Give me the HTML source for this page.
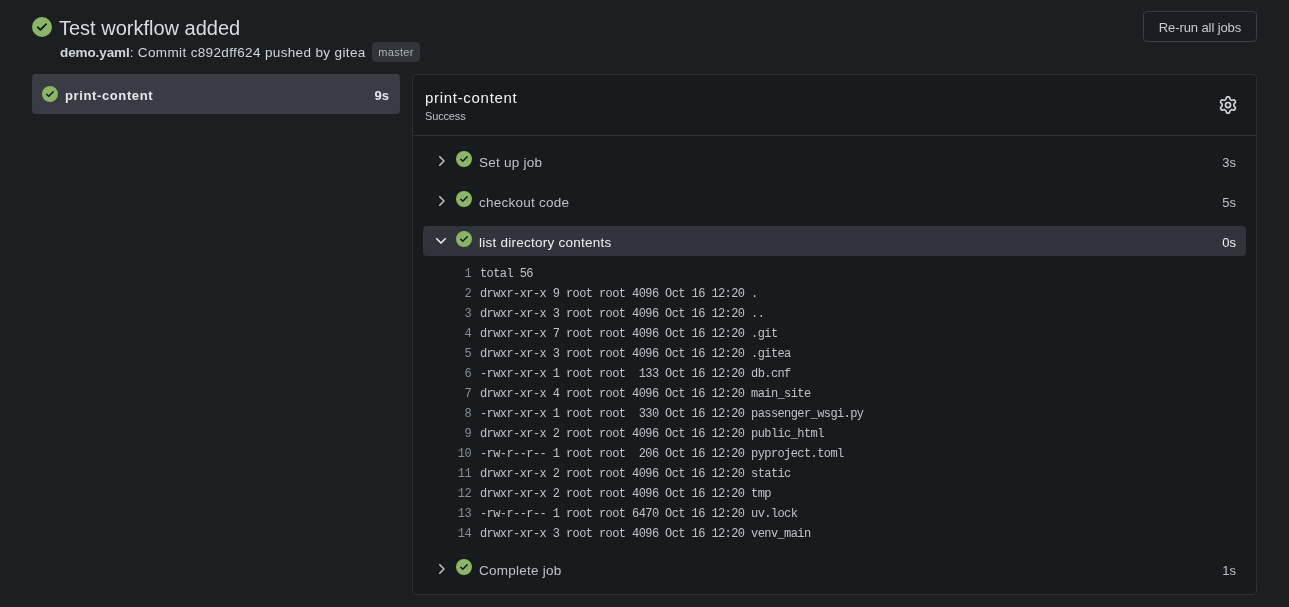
<!DOCTYPE html>
<html><head><meta charset="utf-8">
<style>
*{box-sizing:border-box;margin:0;padding:0}
html,body{width:1289px;height:607px;overflow:hidden;background:#1c1f22;font-family:"Liberation Sans",sans-serif;color:#d2d7dd}
.abs{position:absolute;will-change:transform}
svg{display:block}
.title{left:59px;top:16px;font-size:20px;line-height:24px;color:#d9dde2;white-space:nowrap}
.sub{left:60px;top:45px;font-size:13.5px;line-height:16px;letter-spacing:0.36px;color:#d0d5db;white-space:nowrap}
.sub b{font-weight:bold;letter-spacing:-0.1px}
.label{left:372px;top:42px;width:48px;height:20px;background:#31353a;border-radius:4px;font-size:11px;line-height:20px;text-align:center;color:#aeb4bb;letter-spacing:0.3px}
.btn{left:1143px;top:11px;width:114px;height:31px;border:1px solid #3b3f45;border-radius:4px;background:#1a1d21;font-size:13px;line-height:31px;letter-spacing:-0.1px;text-align:center;color:#c9cdd2}
.job{left:32px;top:74px;width:368px;height:40px;background:#393c42;border-radius:4px}
.job .name{position:absolute;left:33px;top:14px;font-size:13px;line-height:16px;font-weight:bold;letter-spacing:0.62px;color:#e4e7eb}
.job .dur{position:absolute;right:11px;top:14px;font-size:13px;line-height:16px;font-weight:bold;color:#e4e7eb}
.panel{will-change:transform;left:412px;top:74px;width:845px;height:521px;border:1px solid #2c3136;border-radius:4px;background:#181b1e}
.ph-title{position:absolute;left:12px;top:14px;font-size:15px;line-height:18px;letter-spacing:0.7px;color:#f0f1f3}
.ph-detail{position:absolute;left:12px;top:34px;font-size:11px;line-height:14px;color:#bec2c8;letter-spacing:-0.15px}
.ph-border{position:absolute;left:0;top:60px;width:843px;height:1px;background:#2c3136}
.step{position:absolute;left:10px;width:823px;height:30px;border-radius:4px;color:#bec2c8;font-size:13px}
.step.sel{background:#31353b;color:#eef0f2}
.step .txt{position:absolute;left:56px;top:9px;line-height:16px;white-space:nowrap;font-size:13.5px;letter-spacing:0.25px}
.step .d{position:absolute;right:10px;top:9px;line-height:16px}
.logs{position:absolute;left:10px;top:189px;font-family:"Liberation Mono",monospace;font-size:12px;letter-spacing:-0.59px;color:#bec2c7}
.ll{height:20px;line-height:20px;white-space:pre;display:flex}
.ln{width:48px;text-align:right;color:#868d95}
.lm{margin-left:9px}
</style></head><body>
<svg class="abs" style="left:32px;top:17px" width="20" height="20" viewBox="0 0 16 16"><circle cx="8" cy="8" r="5" fill="#15171a"/><path fill="#8ab466" d="M8 16A8 8 0 1 1 8 0a8 8 0 0 1 0 16Zm3.78-9.72a.751.751 0 0 0-.018-1.042.751.751 0 0 0-1.042-.018L6.75 9.19 5.28 7.72a.751.751 0 0 0-1.042.018.751.751 0 0 0-.018 1.042l2 2a.75.75 0 0 0 1.06 0Z"/></svg>
<div class="abs title" id="title">Test workflow added</div>
<div class="abs sub" id="sub"><b>demo.yaml</b>: Commit c892dff624 pushed by gitea</div>
<div class="abs label"><span id="lbl">master</span></div>
<div class="abs btn"><span id="btn">Re-run all jobs</span></div>

<div class="abs job">
  <svg style="position:absolute;left:10px;top:12px" width="16" height="16" viewBox="0 0 16 16"><circle cx="8" cy="8" r="5" fill="#15171a"/><path fill="#8ab466" d="M8 16A8 8 0 1 1 8 0a8 8 0 0 1 0 16Zm3.78-9.72a.751.751 0 0 0-.018-1.042.751.751 0 0 0-1.042-.018L6.75 9.19 5.28 7.72a.751.751 0 0 0-1.042.018.751.751 0 0 0-.018 1.042l2 2a.75.75 0 0 0 1.06 0Z"/></svg>
  <div class="name" id="jname">print-content</div>
  <div class="dur" id="jdur">9s</div>
</div>

<div class="abs panel">
  <div class="ph-title" id="ptitle">print-content</div>
  <div class="ph-detail" id="pdet">Success</div>
  <svg style="position:absolute;left:806px;top:21px" width="18" height="18" viewBox="0 0 16 16"><path fill="#d0d4d9" d="M8 0a8.2 8.2 0 0 1 .701.031C9.444.095 9.99.645 10.16 1.29l.288 1.107c.018.066.079.158.212.224.231.114.454.243.668.386.123.082.233.09.299.071l1.103-.303c.644-.176 1.392.021 1.820.63.27.385.506.792.704 1.218.315.675.111 1.422-.364 1.891l-.814.806c-.049.048-.098.147-.088.294.016.257.016.515 0 .772-.01.147.038.246.088.294l.814.806c.475.469.679 1.216.364 1.891a7.977 7.977 0 0 1-.704 1.217c-.428.61-1.176.807-1.820.63l-1.102-.302c-.067-.019-.177-.011-.3.071a5.909 5.909 0 0 1-.668.386c-.133.066-.194.158-.211.224l-.29 1.106c-.168.646-.715 1.196-1.458 1.26a8.006 8.006 0 0 1-1.402 0c-.743-.064-1.289-.614-1.458-1.26l-.289-1.106c-.018-.066-.079-.158-.212-.224a5.738 5.738 0 0 1-.668-.386c-.123-.082-.233-.09-.299-.071l-1.103.303c-.644.176-1.392-.021-1.820-.63a8.12 8.12 0 0 1-.704-1.218c-.315-.675-.111-1.422.363-1.891l.815-.806c.05-.048.098-.147.088-.294a6.214 6.214 0 0 1 0-.772c.01-.147-.038-.246-.088-.294l-.815-.806C.635 6.045.431 5.298.746 4.623a7.92 7.92 0 0 1 .704-1.217c.428-.61 1.176-.807 1.820-.63l1.102.302c.067.019.177.011.3-.071.214-.143.437-.272.668-.386.133-.066.194-.158.211-.224l.29-1.106C6.009.645 6.556.095 7.299.03 7.530.01 7.764 0 8 0Zm-.571 1.525c-.036.003-.108.036-.137.146l-.289 1.105c-.147.561-.549.967-.998 1.189-.173.086-.34.183-.5.29-.417.278-.97.423-1.529.27l-1.103-.303c-.109-.03-.175.016-.195.045-.22.312-.412.644-.573.99-.014.031-.021.11.059.19l.815.806c.411.406.562.957.53 1.456a4.709 4.709 0 0 0 0 .582c.032.499-.119 1.05-.53 1.456l-.815.806c-.081.08-.073.159-.059.19.162.346.353.677.573.989.02.03.085.076.195.046l1.102-.303c.56-.153 1.113-.008 1.530.27.161.107.328.204.501.29.447.222.85.629.997 1.189l.289 1.105c.029.109.101.143.137.146a6.6 6.6 0 0 0 1.142 0c.036-.003.108-.036.137-.146l.289-1.105c.147-.561.549-.967.998-1.189.173-.086.34-.183.5-.29.417-.278.97-.423 1.529-.27l1.103.303c.109.029.175-.016.195-.045.22-.313.411-.644.573-.99.014-.031.021-.11-.059-.19l-.815-.806c-.411-.406-.562-.957-.53-1.456a4.709 4.709 0 0 0 0-.582c-.032-.499.119-1.05.53-1.456l.815-.806c.081-.08.073-.159.059-.19a6.464 6.464 0 0 0-.573-.989c-.02-.03-.085-.076-.195-.046l-1.102.303c-.56.153-1.113.008-1.530-.27a4.44 4.44 0 0 0-.501-.29c-.447-.222-.85-.629-.997-1.189l-.289-1.105c-.029-.11-.101-.143-.137-.146a6.6 6.6 0 0 0-1.142 0ZM11 8a3 3 0 1 1-6 0 3 3 0 0 1 6 0ZM9.5 8a1.5 1.5 0 1 0-3.001.001A1.5 1.5 0 0 0 9.5 8Z"/></svg>
  <div class="ph-border"></div>

  <div class="step" style="top:71px">
    <svg style="position:absolute;left:13px;top:10px" width="10" height="10" viewBox="3 3 10 10"><path fill="#bec2c8" d="M6.22 3.22a.75.75 0 0 1 1.06 0l4.25 4.25a.75.75 0 0 1 0 1.06l-4.25 4.25a.751.751 0 0 1-1.042-.018.751.751 0 0 1-.018-1.042L9.94 8 6.22 4.28a.75.75 0 0 1 0-1.06Z"/></svg>
    <svg style="position:absolute;left:33px;top:5px" width="16" height="16" viewBox="0 0 16 16"><circle cx="8" cy="8" r="5" fill="#15171a"/><path fill="#8ab466" d="M8 16A8 8 0 1 1 8 0a8 8 0 0 1 0 16Zm3.78-9.72a.751.751 0 0 0-.018-1.042.751.751 0 0 0-1.042-.018L6.75 9.19 5.28 7.72a.751.751 0 0 0-1.042.018.751.751 0 0 0-.018 1.042l2 2a.75.75 0 0 0 1.06 0Z"/></svg>
    <div class="txt" id="s1">Set up job</div><div class="d" id="d1">3s</div>
  </div>
  <div class="step" style="top:111px">
    <svg style="position:absolute;left:13px;top:10px" width="10" height="10" viewBox="3 3 10 10"><path fill="#bec2c8" d="M6.22 3.22a.75.75 0 0 1 1.06 0l4.25 4.250a.75.75 0 0 1 0 1.06l-4.25 4.25a.751.751 0 0 1-1.042-.018.751.751 0 0 1-.018-1.042L9.94 8 6.22 4.28a.75.75 0 0 1 0-1.06Z"/></svg>
    <svg style="position:absolute;left:33px;top:5px" width="16" height="16" viewBox="0 0 16 16"><circle cx="8" cy="8" r="5" fill="#15171a"/><path fill="#8ab466" d="M8 16A8 8 0 1 1 8 0a8 8 0 0 1 0 16Zm3.78-9.72a.751.751 0 0 0-.018-1.042.751.751 0 0 0-1.042-.018L6.75 9.19 5.28 7.72a.751.751 0 0 0-1.042.018.751.751 0 0 0-.018 1.042l2 2a.75.75 0 0 0 1.06 0Z"/></svg>
    <div class="txt" id="s2">checkout code</div><div class="d">5s</div>
  </div>
  <div class="step sel" style="top:151px">
    <svg style="position:absolute;left:13px;top:10px" width="10" height="10" viewBox="3 3 10 10"><path fill="#eef0f2" d="M12.78 5.22a.749.749 0 0 1 0 1.06l-4.25 4.25a.749.749 0 0 1-1.06 0L3.22 6.28a.749.749 0 1 1 1.06-1.06L8 8.939l3.72-3.719a.749.749 0 0 1 1.06 0Z"/></svg>
    <svg style="position:absolute;left:33px;top:5px" width="16" height="16" viewBox="0 0 16 16"><circle cx="8" cy="8" r="5" fill="#15171a"/><path fill="#8ab466" d="M8 16A8 8 0 1 1 8 0a8 8 0 0 1 0 16Zm3.78-9.72a.751.751 0 0 0-.018-1.042.751.751 0 0 0-1.042-.018L6.75 9.19 5.28 7.72a.751.751 0 0 0-1.042.018.751.751 0 0 0-.018 1.042l2 2a.75.75 0 0 0 1.06 0Z"/></svg>
    <div class="txt" id="s3">list directory contents</div><div class="d">0s</div>
  </div>

  <div class="logs">
<div class="ll"><span class="ln">1</span><span class="lm">total 56</span></div>
<div class="ll"><span class="ln">2</span><span class="lm">drwxr-xr-x 9 root root 4096 Oct 16 12:20 .</span></div>
<div class="ll"><span class="ln">3</span><span class="lm">drwxr-xr-x 3 root root 4096 Oct 16 12:20 ..</span></div>
<div class="ll"><span class="ln">4</span><span class="lm">drwxr-xr-x 7 root root 4096 Oct 16 12:20 .git</span></div>
<div class="ll"><span class="ln">5</span><span class="lm">drwxr-xr-x 3 root root 4096 Oct 16 12:20 .gitea</span></div>
<div class="ll"><span class="ln">6</span><span class="lm">-rwxr-xr-x 1 root root  133 Oct 16 12:20 db.cnf</span></div>
<div class="ll"><span class="ln">7</span><span class="lm">drwxr-xr-x 4 root root 4096 Oct 16 12:20 main_site</span></div>
<div class="ll"><span class="ln">8</span><span class="lm">-rwxr-xr-x 1 root root  330 Oct 16 12:20 passenger_wsgi.py</span></div>
<div class="ll"><span class="ln">9</span><span class="lm">drwxr-xr-x 2 root root 4096 Oct 16 12:20 public_html</span></div>
<div class="ll"><span class="ln">10</span><span class="lm">-rw-r--r-- 1 root root  206 Oct 16 12:20 pyproject.toml</span></div>
<div class="ll"><span class="ln">11</span><span class="lm">drwxr-xr-x 2 root root 4096 Oct 16 12:20 static</span></div>
<div class="ll"><span class="ln">12</span><span class="lm">drwxr-xr-x 2 root root 4096 Oct 16 12:20 tmp</span></div>
<div class="ll"><span class="ln">13</span><span class="lm">-rw-r--r-- 1 root root 6470 Oct 16 12:20 uv.lock</span></div>
<div class="ll"><span class="ln">14</span><span class="lm">drwxr-xr-x 3 root root 4096 Oct 16 12:20 venv_main</span></div>
  </div>

  <div class="step" style="top:479px">
    <svg style="position:absolute;left:13px;top:10px" width="10" height="10" viewBox="3 3 10 10"><path fill="#bec2c8" d="M6.22 3.22a.75.75 0 0 1 1.06 0l4.25 4.25a.75.75 0 0 1 0 1.06l-4.25 4.25a.751.751 0 0 1-1.042-.018.751.751 0 0 1-.018-1.042L9.94 8 6.22 4.28a.75.75 0 0 1 0-1.06Z"/></svg>
    <svg style="position:absolute;left:33px;top:5px" width="16" height="16" viewBox="0 0 16 16"><circle cx="8" cy="8" r="5" fill="#15171a"/><path fill="#8ab466" d="M8 16A8 8 0 1 1 8 0a8 8 0 0 1 0 16Zm3.78-9.72a.751.751 0 0 0-.018-1.042.751.751 0 0 0-1.042-.018L6.75 9.19 5.28 7.72a.751.751 0 0 0-1.042.018.751.751 0 0 0-.018 1.042l2 2a.75.75 0 0 0 1.06 0Z"/></svg>
    <div class="txt" id="s4">Complete job</div><div class="d">1s</div>
  </div>
</div>
</body></html>
